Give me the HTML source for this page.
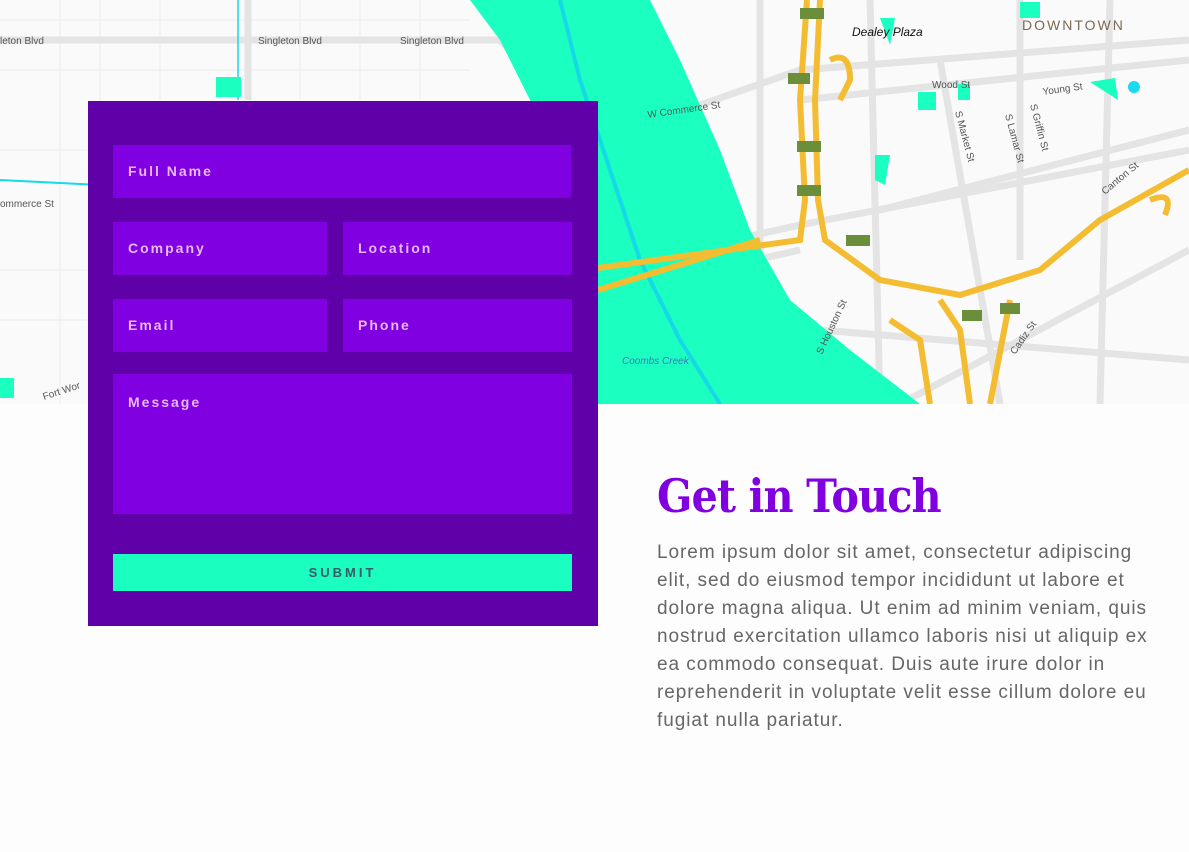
<!DOCTYPE html>
<html><head><meta charset="utf-8"><style>
body{margin:0;width:1189px;height:852px;background:#fdfdfd;position:relative;overflow:hidden;font-family:"Liberation Sans",sans-serif}
.map{position:absolute;left:0;top:0}
.form{position:absolute;left:88px;top:101px;width:510px;height:525px;background:#5f00a9}
.f{position:absolute;background:#8000e2;color:#e6b8f4;font-size:14px;font-weight:bold;letter-spacing:2px;box-sizing:border-box;padding-left:15px;line-height:52px}
.sub{position:absolute;left:25px;top:453px;width:459px;height:37px;background:#1affc0;color:#3a5a66;font-size:13px;font-weight:bold;letter-spacing:3px;text-align:center;line-height:37px}
h1{position:absolute;left:657px;top:468px;margin:0;font-family:"DejaVu Serif",serif;font-size:46px;font-weight:bold;color:#8000e0;letter-spacing:-1px;transform:scaleX(0.9);transform-origin:left top;white-space:nowrap;line-height:56px}
p{position:absolute;left:657px;top:539px;margin:0;font-size:19px;line-height:28px;color:#666;letter-spacing:0.95px;white-space:nowrap}
</style></head><body>
<svg class="map" width="1189" height="404" viewBox="0 0 1189 404">
<rect width="1189" height="404" fill="#fafafa"/>
<g stroke="#ececec" stroke-width="1" fill="none">
<path d="M0 20H470M0 70H470M0 150H470M0 270H90M0 320H90M60 0V404M100 0V404M160 0V100M300 0V100M360 0V100M420 0V100"/>
</g>
<g stroke="#e4e4e4" stroke-width="7" fill="none">
<path d="M0 40H500M248 0V100M500 40L560 100"/>
<path d="M598 270L800 225L1189 150M598 295L800 250"/>
<path d="M600 140L800 70L1189 40"/>
<path d="M760 0V404M870 0L880 404M940 60L1000 404M1020 0V260M1110 0L1100 404"/>
<path d="M800 100L1189 60M880 210L1189 130M820 330L1189 360M900 404L1189 250"/>
</g>
<path d="M470 0H650L680 60L720 150L750 230L790 300L850 350L920 404H598V250L560 180L530 100L500 40Z" fill="#1bffc0"/>
<path d="M560 0L580 80L610 170L640 260L680 340L720 404" stroke="#16d9e8" stroke-width="4" fill="none"/>
<path d="M0 180L100 185" stroke="#16d9e8" stroke-width="2"/>
<path d="M238 0V100" stroke="#16d9e8" stroke-width="1.5"/>
<g fill="#1bffc0">
<rect x="216" y="77" width="25" height="20"/><rect x="0" y="378" width="14" height="20"/>
<rect x="918" y="92" width="18" height="18"/><rect x="958" y="84" width="12" height="16"/>
<path d="M1090 82L1115 78L1118 100Z"/><path d="M875 155L890 155L885 185L875 180Z"/>
<rect x="1020" y="2" width="20" height="16"/><path d="M880 18L895 18L890 45Z"/>
</g>
<circle cx="1134" cy="87" r="6" fill="#1bd9ee"/>
<g stroke="#f4bc30" stroke-width="6" fill="none">
<path d="M807 0L800 100L805 200L800 240L598 268"/>
<path d="M820 0L815 100L818 200L825 240L880 280L960 295L1040 270L1100 220L1189 170"/>
<path d="M760 240L598 290"/>
<path d="M940 300L960 330L970 404M1010 300L990 404"/>
<path d="M890 320L920 340L930 404"/>
<path d="M1150 200Q1175 190 1165 215"/>
<path d="M830 60Q850 50 850 80L840 100"/>
</g>
<g font-size="10" fill="#555">
<text x="0" y="44">leton Blvd</text><text x="258" y="44">Singleton Blvd</text><text x="400" y="44">Singleton Blvd</text>
<text x="0" y="207">ommerce St</text><text x="648" y="118" transform="rotate(-8 648 118)">W Commerce St</text>
<text x="1043" y="95" transform="rotate(-8 1043 95)">Young St</text><text x="932" y="88">Wood St</text>
<text x="44" y="400" transform="rotate(-18 44 400)">Fort Wor</text>
<text x="622" y="364" fill="#3a7ab8" font-style="italic">Coombs Creek</text>
<text x="1105" y="195" transform="rotate(-40 1105 195)">Canton St</text>
<text x="1015" y="355" transform="rotate(-55 1015 355)">Cadiz St</text>
<text x="822" y="355" transform="rotate(-65 822 355)">S Houston St</text>
<text x="955" y="112" transform="rotate(75 955 112)">S Market St</text>
<text x="1005" y="115" transform="rotate(75 1005 115)">S Lamar St</text>
<text x="1030" y="105" transform="rotate(75 1030 105)">S Griffin St</text>
</g>
<text x="852" y="36" font-size="12" font-style="italic" fill="#111">Dealey Plaza</text>
<text x="1022" y="30" font-size="14" fill="#7a6a55" letter-spacing="2">DOWNTOWN</text>
<g fill="#6a8e3a"><rect x="800" y="8" width="24" height="11"/><rect x="788" y="73" width="22" height="11"/><rect x="797" y="141" width="24" height="11"/><rect x="797" y="185" width="24" height="11"/><rect x="846" y="235" width="24" height="11"/><rect x="962" y="310" width="20" height="11"/><rect x="1000" y="303" width="20" height="11"/></g>
</svg>
<div class="form">
<div class="f" style="left:25px;top:44px;width:458px;height:53px">Full Name</div>
<div class="f" style="left:25px;top:121px;width:214px;height:53px">Company</div>
<div class="f" style="left:255px;top:121px;width:229px;height:53px">Location</div>
<div class="f" style="left:25px;top:198px;width:214px;height:53px">Email</div>
<div class="f" style="left:255px;top:198px;width:229px;height:53px">Phone</div>
<div class="f" style="left:25px;top:273px;width:459px;height:140px;line-height:56px">Message</div>
<div class="sub">SUBMIT</div>
</div>
<h1>Get in Touch</h1>
<p>Lorem ipsum dolor sit amet, consectetur adipiscing<br>elit, sed do eiusmod tempor incididunt ut labore et<br>dolore magna aliqua. Ut enim ad minim veniam, quis<br>nostrud exercitation ullamco laboris nisi ut aliquip ex<br>ea commodo consequat. Duis aute irure dolor in<br>reprehenderit in voluptate velit esse cillum dolore eu<br>fugiat nulla pariatur.</p>
</body></html>
